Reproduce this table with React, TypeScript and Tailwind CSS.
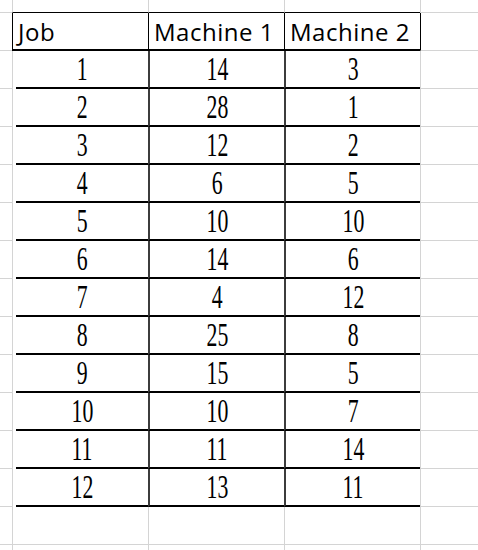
import React from "react";

const data: [number, number, number][] = [
  [1, 14, 3],
  [2, 28, 1],
  [3, 12, 2],
  [4, 6, 5],
  [5, 10, 10],
  [6, 14, 6],
  [7, 4, 12],
  [8, 25, 8],
  [9, 15, 5],
  [10, 10, 7],
  [11, 11, 14],
  [12, 13, 11],
];

const serif = { fontFamily: '"Liberation Serif", "Times New Roman", serif' };

function Num({ v }: { v: number }) {
  return (
    <span
      className="inline-block text-[33px] leading-none text-black scale-x-[0.66]"
      style={serif}
    >
      {v}
    </span>
  );
}

export default function App() {
  const headers = ["Job", "Machine 1", "Machine 2"];
  return (
    <div
      className="w-[478px] h-[550px] overflow-hidden bg-white"
      style={{ fontFamily: '"Open Sans", Lato, sans-serif' }}
    >
      {/* top partial row */}
      <div className="flex h-[13px]">
        <div className="w-[12px] shrink-0 border-b border-[#d4d4d4]" />
        {[0, 1, 2].map((i) => (
          <div
            key={i}
            className="w-[136px] shrink-0 border-l border-b border-l-[#d4d4d4] border-b-black"
          />
        ))}
        <div className="flex-1 border-l border-b border-[#d4d4d4]" />
      </div>

      {/* header row */}
      <div className="flex h-[38px]">
        <div className="w-[12px] shrink-0 border-b border-[#d4d4d4]" />
        {headers.map((h) => (
          <div
            key={h}
            className="w-[136px] shrink-0 border-l border-b-2 border-black pl-[5px] pt-[7px] text-[24px] leading-[24px] font-medium tracking-[0.5px] text-black whitespace-nowrap"
          >
            {h}
          </div>
        ))}
        <div className="flex-1 border-l border-b border-l-black border-b-[#d4d4d4]" />
      </div>

      {/* data rows */}
      {data.map((r, idx) => (
        <div key={idx} className="flex h-[38px]">
          <div className="w-[12px] shrink-0 border-b border-[#d4d4d4]" />
          <div className="w-[136px] shrink-0 border-l border-[#d4d4d4] pl-[3px]">
            <div className="h-full border-b-2 border-black flex items-center justify-center">
              <Num v={r[0]} />
            </div>
          </div>
          <div className="w-[136px] shrink-0 border-l-2 border-b-2 border-l-[#3c3c3c] border-b-black flex items-center justify-center">
            <Num v={r[1]} />
          </div>
          <div className="w-[136px] shrink-0 border-l-2 border-b-2 border-l-[#3c3c3c] border-b-black flex items-center justify-center">
            <Num v={r[2]} />
          </div>
          <div className="flex-1 border-l border-b border-[#d4d4d4]" />
        </div>
      ))}

      {/* empty rows below */}
      {[0, 1].map((i) => (
        <div key={i} className="flex h-[38px]">
          <div className="w-[12px] shrink-0 border-b border-[#d4d4d4]" />
          {[0, 1, 2].map((j) => (
            <div
              key={j}
              className="w-[136px] shrink-0 border-l border-b border-[#d4d4d4]"
            />
          ))}
          <div className="flex-1 border-l border-b border-[#d4d4d4]" />
        </div>
      ))}
    </div>
  );
}
